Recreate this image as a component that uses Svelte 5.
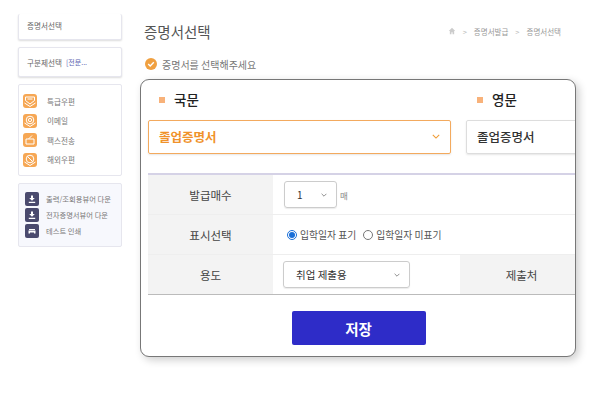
<script>
  const menu = [
    { label: '특급우편', kind: 'mail' },
    { label: '이메일', kind: 'at' },
    { label: '팩스전송', kind: 'fax' },
    { label: '해외우편', kind: 'globe' }
  ];
  const downloads = [
    { label: '출력/조회용뷰어 다운', kind: 'down' },
    { label: '전자증명서뷰어 다운', kind: 'down' },
    { label: '테스트 인쇄', kind: 'print' }
  ];
</script>

<div class="page">
  <aside class="side">
    <div class="card first">증명서선택</div>
    <div class="card second">구분제선택 <span class="more">[전문...</span></div>
    <div class="card menu">
      {#each menu as item}
        <div class="menu-row">
          <span class="orange">
            <svg viewBox="0 0 14 14" width="14" height="14" fill="none" stroke="#fff" stroke-width="1">
              {#if item.kind === 'mail'}
                <path d="M2.500 3h9v3.500L7 10 2.500 6.500zM4.500 5h5M1.500 9 7 12.500 12.500 9" />
              {:else if item.kind === 'at'}
                <circle cx="7" cy="6" r="3.800" /><circle cx="7" cy="6" r="1.600" /><path d="M1.500 9 7 12.500 12.500 9" />
              {:else if item.kind === 'fax'}
                <path d="M3 6h8v5H3zM5.500 6l3.500-3.500" />
              {:else}
                <circle cx="7" cy="6" r="3.800" /><path d="M4.300 3.300l5.400 5.400M1.500 9 7 12.500 12.500 9" />
              {/if}
            </svg>
          </span>
          <span>{item.label}</span>
        </div>
      {/each}
    </div>
    <div class="card downloads">
      {#each downloads as item}
        <div class="down-row">
          <span class="navy">
            <svg viewBox="0 0 14 14" width="14" height="14" fill="#fff">
              {#if item.kind === 'down'}
                <path d="M6 3.500h2v2.500h1.800L7 8.800 4.200 6H6zM3.800 9.800h6.400V11H3.800z" />
              {:else}
                <path d="M4 5h6v1H4zM3.500 6.500h7V9.500H9V8.500H5v1H3.500z" />
              {/if}
            </svg>
          </span>
          <span>{item.label}</span>
        </div>
      {/each}
    </div>
  </aside>

  <main class="main">
    <header class="head">
      <h1>증명서선택</h1>
      <nav class="crumbs">
        <svg viewBox="0 0 10 10" width="8" height="8" fill="#ccc"><path d="M5 1 1 5h1.300v4h2V6.500h1.400V9h2V5H9z" /></svg>
        <span class="sep">&gt;</span>
        <span>증명서발급</span>
        <span class="sep">&gt;</span>
        <span>증명서선택</span>
      </nav>
    </header>

    <p class="notice">
      <svg viewBox="0 0 12 12" width="12" height="12">
        <circle cx="6" cy="6" r="6" fill="#f0a040" />
        <path d="M3.200 6.100 5.200 8 8.800 4.300" fill="none" stroke="#fff" stroke-width="1.400" />
      </svg>
      증명서를 선택해주세요
    </p>

    <section class="panel">
      <div class="langs">
        <div class="lang">
          <div class="lang-title"><i></i>국문</div>
          <div class="big-select active">
            <span>졸업증명서</span>
            <svg viewBox="0 0 10 6" width="8" height="5" fill="none" stroke="#f09a30" stroke-width="1.300"><path d="M1 1l4 4 4-4" /></svg>
          </div>
        </div>
        <div class="lang">
          <div class="lang-title"><i></i>영문</div>
          <div class="big-select"><span>졸업증명서</span></div>
        </div>
      </div>

      <div class="table">
        <div class="row">
          <div class="th">발급매수</div>
          <div class="td">
            <div class="select count">
              <span>1</span>
              <svg viewBox="0 0 10 6" width="6" height="4" fill="none" stroke="#666" stroke-width="1.200"><path d="M1 1l4 4 4-4" /></svg>
            </div>
            <span class="unit">매</span>
          </div>
        </div>
        <div class="row">
          <div class="th">표시선택</div>
          <div class="td radios">
            <label><input type="radio" name="show" checked />입학일자 표기</label>
            <label><input type="radio" name="show" />입학일자 미표기</label>
          </div>
        </div>
        <div class="row last">
          <div class="th">용도</div>
          <div class="td use">
            <div class="select purpose">
              <span>취업 제출용</span>
              <svg viewBox="0 0 10 6" width="6" height="4" fill="none" stroke="#666" stroke-width="1.200"><path d="M1 1l4 4 4-4" /></svg>
            </div>
          </div>
          <div class="th submit">제출처</div>
        </div>
      </div>

      <div class="actions">
        <button type="button">저장</button>
      </div>
    </section>
  </main>
</div>

<style>
  :global(body) {
    background: #fff;
    font-family: "Noto Sans CJK KR", "Noto Sans", sans-serif;
  }
  .page {
    display: flex;
    align-items: flex-start;
    width: 600px;
    height: 400px;
    padding-left: 18px;
    box-sizing: border-box;
    overflow: hidden;
    color: #555;
  }

  /* left column */
  .side {
    width: 104px;
    flex: none;
    padding-top: 14px;
    display: flex;
    flex-direction: column;
    font-size: 7.600px;
    color: #666;
  }
  .card {
    background: #fff;
    border: 1px solid #e6e6ee;
    border-radius: 2px;
    box-sizing: border-box;
    box-shadow: 0 1px 2px rgba(0, 0, 0, 0.14);
  }
  .first {
    height: 26px;
    padding: 6px 0 0 8px;
    border-top: 0;
    margin-bottom: 7px;
  }
  .second {
    height: 30px;
    display: flex;
    align-items: center;
    gap: 4px;
    padding-left: 8px;
    margin-bottom: 7px;
  }
  .more {
    color: #5a5fb0;
    font-size: 7px;
  }
  .menu {
    height: 92px;
    padding: 9px 0 0 4px;
    display: flex;
    flex-direction: column;
    gap: 5.500px;
    box-shadow: none;
    margin-bottom: 7px;
  }
  .menu-row {
    display: flex;
    align-items: center;
    gap: 10px;
    height: 14px;
    color: #777;
  }
  .orange {
    width: 14px;
    height: 14px;
    background: #f6a754;
    border-radius: 3px;
    display: flex;
  }
  .downloads {
    height: 64px;
    background: #f7f8fd;
    padding: 8px 0 0 6px;
    display: flex;
    flex-direction: column;
    gap: 2px;
    font-size: 7.300px;
    box-shadow: none;
  }
  .down-row {
    display: flex;
    align-items: center;
    gap: 7px;
    height: 14px;
    color: #777;
  }
  .navy {
    width: 14px;
    height: 14px;
    background: #4a4a6e;
    border-radius: 2px;
    display: flex;
  }

  /* main column */
  .main {
    margin-left: 18px;
    width: 436px;
    flex: none;
  }
  .head {
    display: flex;
    align-items: center;
    justify-content: space-between;
    height: 22px;
    margin-top: 20px;
    padding: 0 15px 0 4px;
  }
  h1 {
    margin: 0;
    font-size: 14.500px;
    font-weight: 400;
    color: #555;
  }
  .crumbs {
    display: flex;
    align-items: center;
    gap: 7px;
    font-size: 7.500px;
    color: #999;
  }
  .sep {
    color: #bbb;
  }
  .notice {
    display: flex;
    align-items: center;
    gap: 5px;
    margin: 13px 0 0 5px;
    height: 18px;
    font-size: 10px;
    color: #777;
  }
  .panel {
    margin-top: 6px;
    height: 278px;
    box-sizing: border-box;
    border: 1px solid #777;
    border-radius: 9px;
    background: #fff;
    overflow: hidden;
    box-shadow: 3px 3px 8px rgba(0, 0, 0, 0.2);
  }
  .langs {
    display: flex;
    gap: 15px;
    padding: 0 0 0 7px;
    height: 93px;
  }
  .lang {
    flex: none;
    width: 303px;
  }
  .lang-title {
    height: 40px;
    box-sizing: border-box;
    padding: 0 0 2px 11px;
    display: flex;
    align-items: center;
    gap: 9px;
    font-size: 13.500px;
    font-weight: 500;
    color: #222;
  }
  .lang-title i {
    width: 6px;
    height: 6px;
    margin-top: 2px;
    background: #f8b27a;
  }
  .big-select {
    height: 34px;
    box-sizing: border-box;
    border: 1px solid #ddd;
    border-radius: 2px;
    display: flex;
    align-items: center;
    justify-content: space-between;
    padding: 0 10px 1px;
    font-size: 12.500px;
    font-weight: 500;
    color: #333;
    box-shadow: 0 1px 2px rgba(0, 0, 0, 0.1);
  }
  .big-select.active {
    border-color: #f3aa5e;
    color: #f0922a;
    font-weight: 700;
  }
  .table {
    margin-left: 7px;
    border-top: 2px solid #d5d2e6;
  }
  .row {
    display: flex;
    height: 40px;
    box-sizing: border-box;
    border-bottom: 1px solid #eee;
    font-size: 11px;
  }
  .row.last {
    border-bottom: 1px solid #bbb;
  }
  .th {
    width: 125px;
    flex: none;
    background: #f3f3f3;
    display: flex;
    align-items: center;
    justify-content: center;
    color: #444;
    font-size: 11.500px;
  }
  .td {
    flex: 1;
    display: flex;
    align-items: center;
    padding-left: 11px;
    font-size: 9.800px;
    color: #555;
  }
  .td.use {
    flex: none;
    width: 187px;
    box-sizing: border-box;
    padding-left: 10px;
  }
  .th.submit {
    width: 123px;
  }
  .select {
    height: 27px;
    box-sizing: border-box;
    border: 1px solid #ccc;
    border-radius: 3px;
    display: flex;
    align-items: center;
    justify-content: space-between;
    color: #333;
    box-shadow: 0 1px 1px rgba(0, 0, 0, 0.08);
  }
  .count {
    width: 53px;
    padding: 0 9px 0 12px;
    font-size: 10px;
  }
  .unit {
    margin-left: 3px;
    font-size: 8.500px;
    color: #888;
  }
  .purpose {
    width: 127px;
    flex: none;
    padding: 0 9px 0 12px;
    font-size: 10.500px;
  }
  .radios {
    gap: 7px;
    padding-left: 14px;
  }
  label {
    display: flex;
    align-items: center;
    gap: 3px;
  }
  input {
    margin: 0;
    width: 10px;
    height: 10px;
    accent-color: #1a6fd8;
  }
  .actions {
    display: flex;
    justify-content: center;
    padding: 16px 0 0 1px;
  }
  button {
    width: 134px;
    height: 34px;
    border: 0;
    border-radius: 2px;
    background: #2e2cc8;
    color: #fff;
    font: 700 14.500px "Noto Sans CJK KR", sans-serif;
  }
</style>
